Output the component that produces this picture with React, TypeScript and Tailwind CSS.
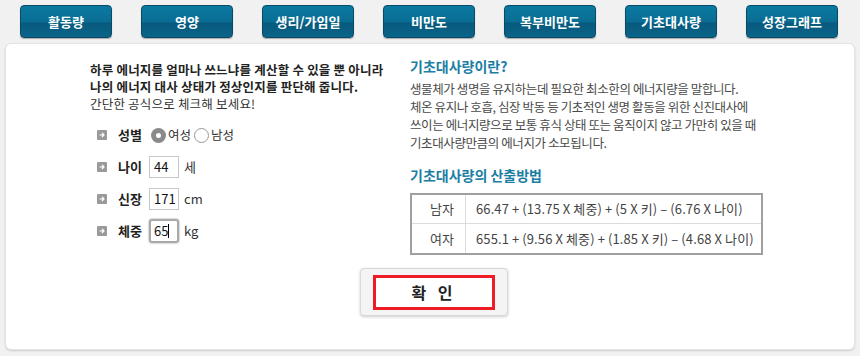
import { useState } from "react";

const tabs = ["활동량", "영양", "생리/가임일", "비만도", "복부비만도", "기초대사량", "성장그래프"];

const font = "font-['Noto_Sans_CJK_KR','Noto_Sans',sans-serif]";

function Bullet() {
  return (
    <span className="w-[10px] h-[10px] bg-[#9a9a9a] rounded-[1px] flex items-center justify-center">
      <svg width="8" height="8" viewBox="0 0 8 8">
        <path d="M1.5 4h4M4 2l2 2-2 2" stroke="#fff" strokeWidth="1.2" fill="none" />
      </svg>
    </span>
  );
}

function Field({ label, value, unit, focused }: { label: string; value: string; unit: string; focused?: boolean }) {
  return (
    <div className="flex items-center h-[22px]">
      <Bullet />
      <span className="ml-[11px] w-[31px] text-[13px] font-bold text-[#222]">{label}</span>
      <div
        className={
          focused
            ? "w-[30px] h-[24px] border-2 border-[#a8a8a8] rounded-[3px] shadow-[0_0_2px_#888] flex items-center pl-[3px] text-[13px] text-[#111]"
            : "w-[30px] h-[22px] border border-[#c8c8c8] flex items-center pl-[4px] text-[13px] text-[#111]"
        }
      >
        {value}
        {focused && <span className="w-px h-[14px] bg-black" />}
      </div>
      <span className="ml-[5px] text-[13px] text-[#333]">{unit}</span>
    </div>
  );
}

function Radio({ on, label, onPick }: { on: boolean; label: string; onPick: () => void }) {
  return (
    <label className="flex items-center cursor-pointer" onClick={onPick}>
      <span
        className={
          on
            ? "w-[15px] h-[15px] rounded-full bg-[#8a8a8a] flex items-center justify-center"
            : "w-[15px] h-[15px] rounded-full border border-[#999] bg-white"
        }
      >
        {on && <span className="w-[5px] h-[5px] rounded-full bg-white" />}
      </span>
      <span className="ml-[2px] text-[12.5px] text-[#333]">{label}</span>
    </label>
  );
}

export default function App() {
  const [gender, setGender] = useState("f");
  return (
    <div className={`w-[860px] h-[356px] bg-[#f1f1f1] ${font} overflow-hidden`}>
      <div className="flex gap-[29px] pl-[20px] pt-[5px]">
        {tabs.map((t) => (
          <div
            key={t}
            className="w-[92px] h-[33px] rounded-[4px] border border-[#0a4a66] bg-[linear-gradient(#0a7aa2_0%,#0a6d93_50%,#075a7d_56%,#0a6489_100%)] shadow-[0_1px_1px_rgba(0,0,0,0.3)] flex items-center justify-center text-white text-[13px] font-bold"
          >
            {t}
          </div>
        ))}
      </div>
      <div className="mx-[5px] mt-[5px] h-[307px] bg-white rounded-[6px] border border-[#e4e4e4] shadow-[0_1px_2px_rgba(0,0,0,0.15)] flex flex-col">
        <div className="flex pt-[11px]">
          <div className="w-[320px] ml-[84px] mt-[6px]">
            <div className="text-[12.5px] leading-[17px] font-bold text-[#222] tracking-[0.2px] whitespace-nowrap">
              <p>하루 에너지를 얼마나 쓰느냐를 계산할 수 있을 뿐 아니라</p>
              <p>나의 에너지 대사 상태가 정상인지를 판단해 줍니다.</p>
            </div>
            <p className="text-[12.5px] leading-[17px] text-[#333] tracking-[0.2px]">간단한 공식으로 체크해 보세요!</p>
            <div className="flex flex-col gap-[10px] mt-[12px] ml-[7px]">
              <div className="flex items-center h-[22px]">
                <Bullet />
                <span className="ml-[11px] w-[33px] text-[13px] font-bold text-[#222]">성별</span>
                <Radio on={gender === "f"} label="여성" onPick={() => setGender("f")} />
                <span className="w-[3px]" />
                <Radio on={gender === "m"} label="남성" onPick={() => setGender("m")} />
              </div>
              <Field label="나이" value="44" unit="세" />
              <Field label="신장" value="171" unit="cm" />
              <Field label="체중" value="65" unit="kg" focused />
            </div>
          </div>
          <div className="w-[380px]">
            <h2 className="text-[14px] font-bold text-[#1b7ea3] leading-[20px] mt-[1px]">기초대사량이란?</h2>
            <div className="text-[12.5px] leading-[18px] text-[#4a4a4a] mt-[4px] whitespace-nowrap tracking-[-0.4px]">
              <p>생물체가 생명을 유지하는데 필요한 최소한의 에너지량을 말합니다.</p>
              <p>체온 유지나 호흡, 심장 박동 등 기초적인 생명 활동을 위한 신진대사에</p>
              <p>쓰이는 에너지량으로 보통 휴식 상태 또는 움직이지 않고 가만히 있을 때</p>
              <p>기초대사량만큼의 에너지가 소모됩니다.</p>
            </div>
            <h2 className="text-[14px] font-bold text-[#1b7ea3] leading-[20px] mt-[13px]">기초대사량의 산출방법</h2>
            <div className="mt-[8px] w-[353px] border-2 border-[#a0a0a0] text-[13px] text-[#444]">
              <div className="flex h-[29px] border-b border-[#dcdcdc]">
                <div className="w-[54px] border-r border-[#dcdcdc] flex items-center justify-end pr-[11px]">남자</div>
                <div className="flex items-center pl-[10px] tracking-[0.1px] whitespace-nowrap">66.47 + (13.75 X 체중) + (5 X 키) – (6.76 X 나이)</div>
              </div>
              <div className="flex h-[29px]">
                <div className="w-[54px] border-r border-[#dcdcdc] flex items-center justify-end pr-[11px]">여자</div>
                <div className="flex items-center pl-[10px] tracking-[0.1px] whitespace-nowrap">655.1 + (9.56 X 체중) + (1.85 X 키) – (4.68 X 나이)</div>
              </div>
            </div>
          </div>
        </div>
        <div className="flex justify-center mt-[13px] ml-[8px]">
          <div className="w-[148px] h-[48px] rounded-[4px] bg-[#f4f4f4] border border-[#d8d8d8] shadow-[0_1px_3px_rgba(0,0,0,0.2)] flex items-center justify-center">
            <button className="w-[122px] h-[35px] border-[3px] border-[#ee1c24] bg-white text-[16px] font-bold text-[#222] tracking-[4px] flex items-center justify-center">
              확 인
            </button>
          </div>
        </div>
      </div>
    </div>
  );
}
